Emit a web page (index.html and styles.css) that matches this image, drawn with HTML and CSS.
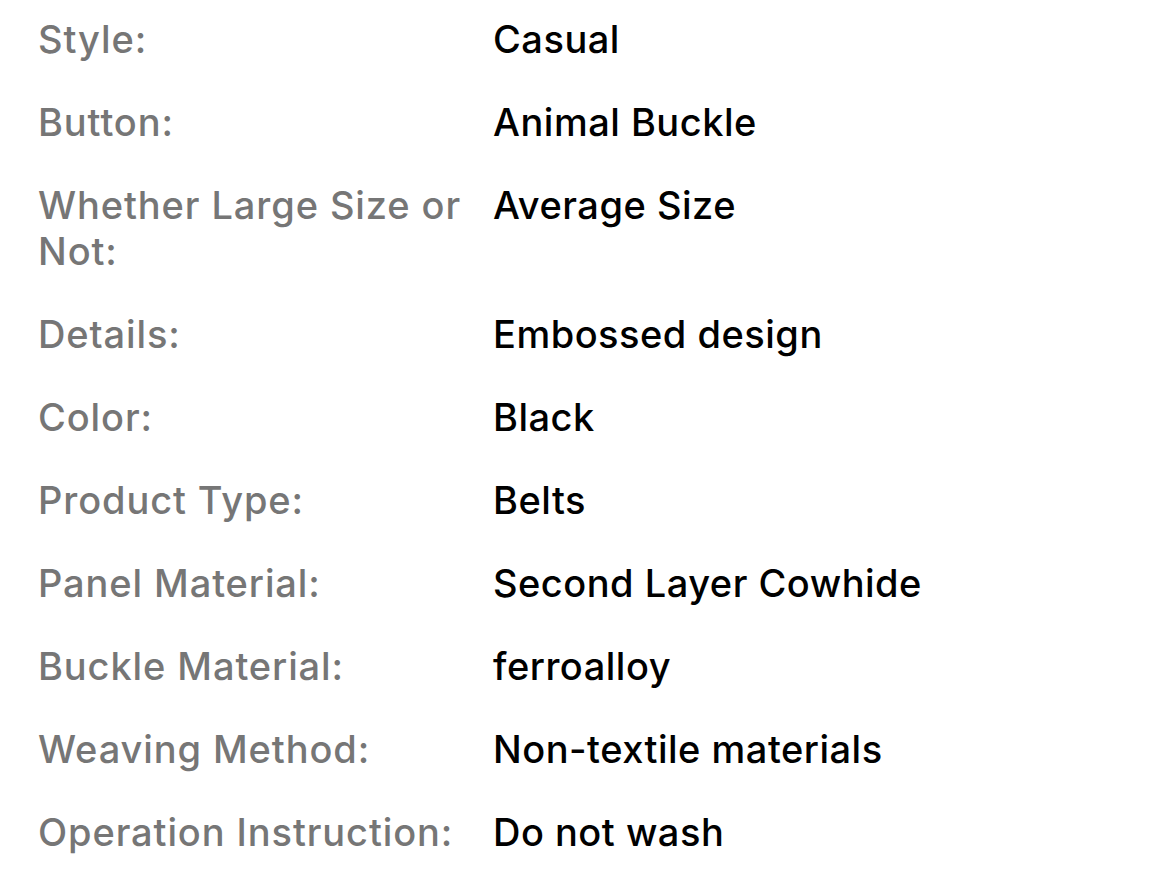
FILE: index.html
```html
<!DOCTYPE html>
<html lang="en">
<head>
<meta charset="utf-8">
<title>Specifications</title>
<link rel="stylesheet" href="styles.css">
</head>
<body>
<dl class="specs">
  <div class="row"><dt>Style:</dt><dd>Casual</dd></div>
  <div class="row"><dt>Button:</dt><dd>Animal Buckle</dd></div>
  <div class="row"><dt>Whether Large Size or Not:</dt><dd>Average Size</dd></div>
  <div class="row"><dt>Details:</dt><dd>Embossed design</dd></div>
  <div class="row"><dt>Color:</dt><dd>Black</dd></div>
  <div class="row"><dt>Product Type:</dt><dd>Belts</dd></div>
  <div class="row"><dt>Panel Material:</dt><dd>Second Layer Cowhide</dd></div>
  <div class="row"><dt>Buckle Material:</dt><dd>ferroalloy</dd></div>
  <div class="row"><dt>Weaving Method:</dt><dd>Non-textile materials</dd></div>
  <div class="row"><dt>Operation Instruction:</dt><dd>Do not wash</dd></div>
</dl>
</body>
</html>
```
FILE: styles.css
```css
html, body {
  margin: 0;
  padding: 0;
  background: #ffffff;
}
body {
  font-family: Inter, "Noto Sans", "Liberation Sans", sans-serif;
  font-weight: 500;
  font-size: 38px;
  line-height: 46px;
  -webkit-font-smoothing: antialiased;
}
.specs {
  margin: 0;
  padding: 16px 0 0 38px;
  display: flex;
  flex-direction: column;
  gap: 37px;
}
.row {
  display: grid;
  grid-template-columns: 440px 1fr;
  column-gap: 15px;
}
.row dt {
  margin: 0;
  color: #767676;
  letter-spacing: 0.9px;
}
.row dd {
  margin: 0;
  color: #000000;
  letter-spacing: 0.5px;
}
```
